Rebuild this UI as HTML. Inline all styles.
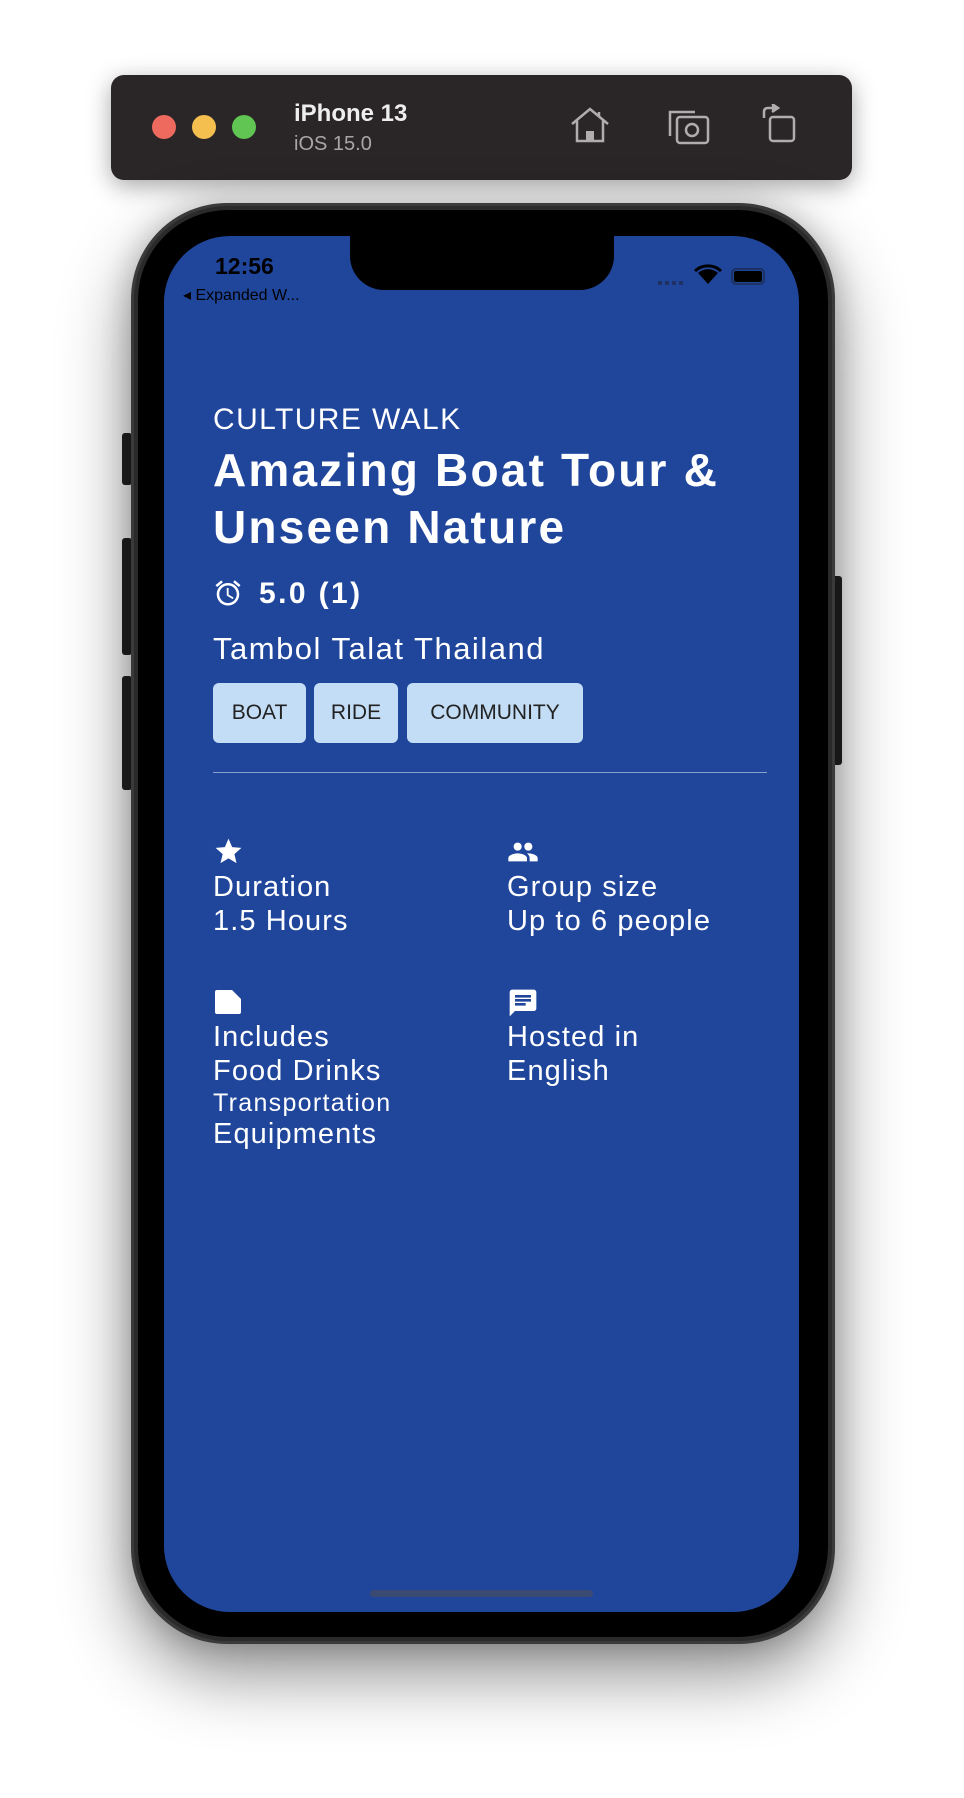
<!DOCTYPE html>
<html><head><meta charset="utf-8"><style>
*{margin:0;padding:0;box-sizing:border-box}
body{width:964px;height:1798px;background:#fff;position:relative;overflow:hidden;font-family:"Liberation Sans",sans-serif}
.abs{position:absolute}
.t{position:absolute;white-space:nowrap;color:#fff;line-height:1}
.b{letter-spacing:1.1px}
</style></head><body>
<!-- toolbar -->
<div class="abs" style="left:111px;top:75px;width:741px;height:105px;background:#2a2628;border-radius:13px;box-shadow:0 6px 24px rgba(0,0,0,.35)"></div>
<div class="abs" style="left:152px;top:115px;width:24px;height:24px;border-radius:50%;background:#ee6a5f"></div>
<div class="abs" style="left:192px;top:115px;width:24px;height:24px;border-radius:50%;background:#f5bf4f"></div>
<div class="abs" style="left:232px;top:115px;width:24px;height:24px;border-radius:50%;background:#61c554"></div>
<div class="t" style="left:294px;top:102px;font-size:24px;font-weight:bold;color:#eee">iPhone 13</div>
<div class="t" style="left:294px;top:134px;font-size:20px;color:#a8a6a7">iOS 15.0</div>
<svg class="abs" style="left:568px;top:106px" width="44" height="40" viewBox="0 0 44 40" fill="none" stroke="#b0adae" stroke-width="2.5"><path d="M4 18 L22 3 L40 18 M9 14 V35 H35 V14 M31 6 V11"/><rect x="18" y="25" width="8" height="10" fill="#b0adae" stroke="none"/></svg>
<svg class="abs" style="left:667px;top:108px" width="44" height="38" viewBox="0 0 44 38" fill="none" stroke="#b0adae" stroke-width="2.5"><path d="M3 28 V4 H28"/><rect x="10" y="9" width="31" height="26" rx="3"/><circle cx="25" cy="22" r="6"/></svg>
<svg class="abs" style="left:760px;top:104px" width="40" height="40" viewBox="0 0 40 40" fill="none" stroke="#b0adae" stroke-width="2.5"><rect x="10" y="13" width="24" height="24" rx="3"/><path d="M4 14 V8 Q4 4 8 4 H14"/><path d="M12 0 L18 4 L12 8" fill="#b0adae"/></svg>
<!-- phone -->
<div class="abs" style="left:122px;top:433px;width:10px;height:52px;background:#222;border-radius:3px"></div>
<div class="abs" style="left:122px;top:538px;width:10px;height:117px;background:#222;border-radius:3px"></div>
<div class="abs" style="left:122px;top:676px;width:10px;height:114px;background:#222;border-radius:3px"></div>
<div class="abs" style="left:832px;top:576px;width:10px;height:189px;background:#222;border-radius:3px"></div>
<div class="abs" style="left:131px;top:203px;width:704px;height:1441px;border-radius:96px;background:#3a3a3a;box-shadow:0 30px 70px rgba(0,0,0,.45),0 0 30px rgba(0,0,0,.2)"></div>
<div class="abs" style="left:134px;top:206px;width:698px;height:1435px;border-radius:94px;background:#2a2a2a"></div>
<div class="abs" style="left:138px;top:210px;width:690px;height:1427px;border-radius:90px;background:#000"></div>
<div class="abs" style="left:164px;top:236px;width:635px;height:1376px;border-radius:66px;background:#20469c;overflow:hidden">
  <div class="abs" style="left:186px;top:-10px;width:264px;height:64px;background:#000;border-radius:0 0 34px 34px"></div>
</div>
<div class="t" style="left:215px;top:255px;font-size:23px;font-weight:bold;color:#000">12:56</div>
<div class="t" style="left:183px;top:288px;font-size:16px;color:#000">◂ Expanded W...</div>
<div class="abs" style="left:658px;top:281px;width:28px;height:4px;background:repeating-linear-gradient(90deg,#1d3163 0 4px,transparent 4px 7px)"></div>
<svg class="abs" style="left:694px;top:264px" width="28" height="22" viewBox="0 0 28 22"><path d="M14 20 L4 9 A15 15 0 0 1 24 9 Z" fill="#000"/><path d="M1 7 A19 19 0 0 1 27 7" stroke="#000" stroke-width="3" fill="none"/></svg>
<div class="abs" style="left:731px;top:268px;width:34px;height:17px;border:2px solid #1d3163;border-radius:5px;padding:1px"><div style="width:100%;height:100%;background:#000;border-radius:2px"></div></div>
<!-- content -->
<div class="t" style="left:213px;top:405px;font-size:30px;letter-spacing:1.4px">CULTURE WALK</div>
<div class="t" style="left:213px;top:442px;font-size:46px;font-weight:bold;line-height:57px;letter-spacing:2.2px">Amazing Boat Tour &amp;<br>Unseen Nature</div>
<svg class="abs" style="left:213px;top:578px" width="30" height="30" viewBox="0 0 24 24" fill="#fff"><path d="M22 5.7l-4.6-3.9-1.3 1.5 4.6 3.9L22 5.7zM7.9 3.4L6.6 1.9 2 5.7l1.3 1.5 4.6-3.8zM12.5 8H11v6l4.7 2.9.8-1.2-4-2.4V8zM12 4c-5 0-9 4-9 9s4 9 9 9 9-4 9-9-4-9-9-9zm0 16c-3.9 0-7-3.1-7-7s3.1-7 7-7 7 3.1 7 7-3.1 7-7 7z"/></svg>
<div class="t" style="left:259px;top:579px;font-size:30px;font-weight:bold;letter-spacing:2.4px">5.0 (1)</div>
<div class="t" style="left:213px;top:633px;font-size:31px;letter-spacing:1.5px">Tambol Talat Thailand</div>
<div class="abs" style="left:213px;top:683px;width:93px;height:60px;background:#c3ddf6;border-radius:6px;font-size:21px;line-height:60px;text-align:center;color:#222">BOAT</div>
<div class="abs" style="left:314px;top:683px;width:84px;height:60px;background:#c3ddf6;border-radius:6px;font-size:21px;line-height:60px;text-align:center;color:#222">RIDE</div>
<div class="abs" style="left:407px;top:683px;width:176px;height:60px;background:#c3ddf6;border-radius:6px;font-size:21px;line-height:60px;text-align:center;color:#222">COMMUNITY</div>
<div class="abs" style="left:213px;top:772px;width:554px;height:1px;background:#8aa0cf"></div>
<svg class="abs" style="left:213px;top:836px" width="31" height="31" viewBox="0 0 24 24" fill="#fff"><path d="M12 17.3L18.2 21l-1.6-7L22 9.2l-7.2-.6L12 2 9.2 8.6 2 9.2 7.5 14l-1.7 7z"/></svg>
<svg class="abs" style="left:507px;top:836px" width="32" height="32" viewBox="0 0 24 24" fill="#fff"><path d="M16 11c1.7 0 3-1.3 3-3s-1.3-3-3-3-3 1.3-3 3 1.3 3 3 3zm-8 0c1.7 0 3-1.3 3-3S9.7 5 8 5 5 6.3 5 8s1.3 3 3 3zm0 2c-2.3 0-7 1.2-7 3.5V19h14v-2.5C15 14.2 10.3 13 8 13zm8 0c-.3 0-.6 0-1 .1 1.2.8 2 2 2 3.4V19h6v-2.5c0-2.3-4.7-3.5-7-3.5z"/></svg>
<div class="t b" style="left:213px;top:870px;font-size:29px;line-height:34px">Duration<br>1.5 Hours</div>
<div class="t b" style="left:507px;top:870px;font-size:29px;line-height:34px">Group size<br>Up to 6 people</div>
<svg class="abs" style="left:213px;top:988px" width="30" height="28" viewBox="0 0 30 28" fill="#fff"><path d="M4 2 H19 L28 11 V24 Q28 26 26 26 H4 Q2 26 2 24 V4 Q2 2 4 2 Z"/></svg>
<svg class="abs" style="left:507px;top:986px" width="32" height="34" viewBox="0 0 24 24" fill="#fff"><path d="M20 2H4c-1.1 0-2 .9-2 2v18l4-4h14c1.1 0 2-.9 2-2V4c0-1.1-.9-2-2-2zM6 9h12v2H6V9zm8 5H6v-2h8v2zm4-6H6V6h12v2z"/></svg>
<div class="t b" style="left:213px;top:1020px;font-size:29px;line-height:34px">Includes<br>Food Drinks</div>
<div class="t" style="left:213px;top:1091px;font-size:25px;letter-spacing:1.3px">Transportation</div>
<div class="t b" style="left:213px;top:1120px;font-size:29px">Equipments</div>
<div class="t b" style="left:507px;top:1020px;font-size:29px;line-height:34px">Hosted in<br>English</div>
<div class="abs" style="left:370px;top:1590px;width:223px;height:7px;border-radius:4px;background:#3b4a73"></div>
</body></html>
